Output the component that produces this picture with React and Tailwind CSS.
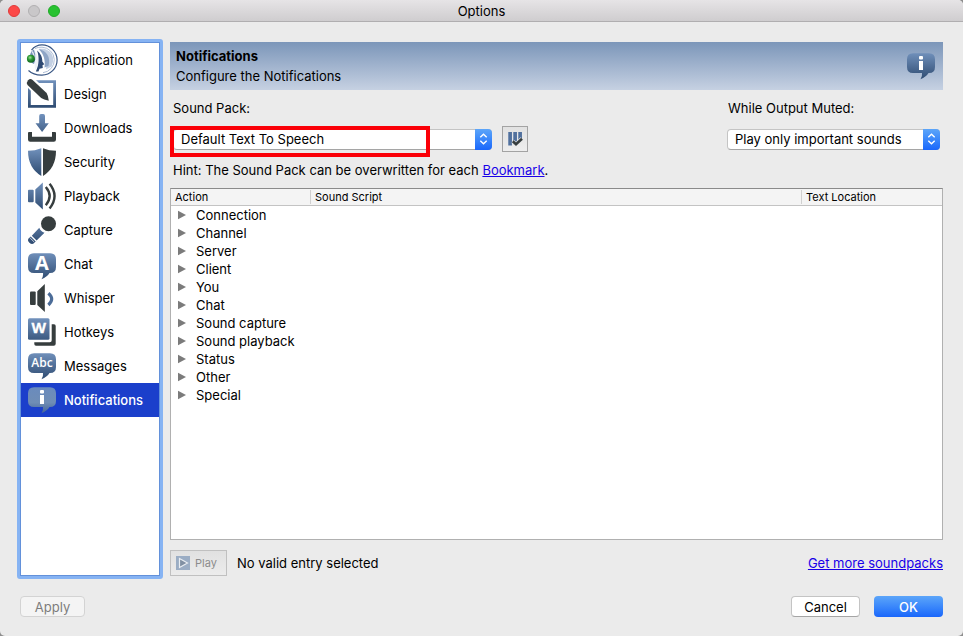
import React, { useState } from "react";

const STEEL = "url(#steel)";
const DARK = "#363d3e";

function Icon({ children, fill = STEEL }) {
  return (
    <svg viewBox="0 0 32 32" className="w-8 h-8 shrink-0" fill={fill} aria-hidden="true">
      {children}
    </svg>
  );
}

// Gradients shared by all the icons
function IconDefs() {
  return (
    <svg className="absolute w-0 h-0" aria-hidden="true">
      <defs>
        <linearGradient id="steel" gradientUnits="userSpaceOnUse" x1="0" y1="2" x2="0" y2="30">
          <stop offset="0" stopColor="#7292bd" />
          <stop offset="1" stopColor="#2d4a70" />
        </linearGradient>
        <linearGradient id="steel-selected" gradientUnits="userSpaceOnUse" x1="0" y1="3" x2="0" y2="29">
          <stop offset="0" stopColor="#6a8bbd" />
          <stop offset="0.6" stopColor="#6f8db5" />
          <stop offset="1" stopColor="#45659a" />
        </linearGradient>
        <linearGradient id="bars" x1="0" y1="0" x2="1" y2="0">
          <stop offset="0" stopColor="#8ba1c2" />
          <stop offset="0.4" stopColor="#4d6c99" />
          <stop offset="1" stopColor="#5877a3" />
        </linearGradient>
        <radialGradient id="led" cx="0.4" cy="0.35" r="0.7">
          <stop offset="0" stopColor="#a6e29a" />
          <stop offset="0.4" stopColor="#2e9a35" />
          <stop offset="1" stopColor="#0c5a1c" />
        </radialGradient>
      </defs>
    </svg>
  );
}

function Bubble({ label, size, weight, y }) {
  return (
    <>
      <path d="M8 3.3H24Q30 3.3 30 9.3V17Q30 23 24 23H23.5Q21 27 15.5 29.3Q17.5 26 17 23H8Q2 23 2 17V9.3Q2 3.3 8 3.3Z" />
      <text
        x="16"
        y={y}
        textAnchor="middle"
        fill="#fff"
        fontSize={size}
        fontWeight={weight}
        fontFamily="'Open Sans', sans-serif"
      >
        {label}
      </text>
    </>
  );
}

function InfoBubble() {
  return (
    <>
      <path d="M8 3.3H24Q30 3.3 30 9.3V17Q30 23 24 23H23.5Q21 27 15.5 29.3Q17.5 26 17 23H8Q2 23 2 17V9.3Q2 3.3 8 3.3Z" />
      <g fill="#fff">
        <rect x="14" y="6" width="4" height="3.4" rx="1" />
        <rect x="14" y="11" width="4" height="9" />
      </g>
    </>
  );
}

const icons = {
  application: (
    <>
      <path
        d="M5.500 6.200Q9.500 .9 16 .9A15.100 15.100 0 0 1 16 31.100Q7.500 31.300 2.500 26.500"
        fill="#fff"
        stroke="#3a5784"
        strokeWidth="1.200"
      />
      <path
        d="M9 4.500Q12 3 16 3.200A12.800 12.800 0 0 1 17 28.700"
        fill="none"
        stroke="#9badca"
        strokeWidth=".8"
      />
      <path d="M13 4.800C24 3.500 30.500 12 25.500 22.500L20 25.500C21.500 17 19.500 9.500 13 4.800Z" fill="#c3d0e3" />
      <path d="M12.500 5C20.500 6.500 25 13 22.500 22L18.500 23.500C19.500 16.500 18 10 12.500 5Z" fill="#8ea5c6" />
      <path d="M11 6.500C15 9.500 16.500 14 16.300 17.500L18.300 20.300L16.500 21.300L16.800 24L13.500 24.800L12.500 27.500H9.800C13 21 13.500 13 11 6.500Z" fill="#2f4a73" />
      <path d="M8.500 6.500C13 12 13.200 20 9.500 26C7.500 20 9.500 13 8.500 6.500Z" fill="#eef2f7" />
      <path d="M4 11.500Q4.500 7 8 5.500Q9.800 10 9.300 15.500L8 20Q4.500 19 4 15Z" fill="#7892b8" />
      <path d="M6 7.500Q8 9.500 8.300 15" fill="none" stroke="#e3e9f2" strokeWidth="1.200" />
      <circle cx="4.900" cy="14.800" r="4" fill="url(#led)" />
    </>
  ),
  design: (
    <>
      <path fillRule="evenodd" d="M2 2.200H30V29.800H2ZM4.800 5V27H27.200V5Z" />
      <path d="M1.500 1L8 .3L12.500 4.500L24 16L25 25L15 22.500L1 9Z" fill="#fff" />
      <path
        d="M2.100 2.300Q4.200 0 6.600 2L20.600 15Q22.200 17.500 22.800 22.700Q17.600 21.900 15.200 20L1.500 7Q.1 4.500 2.100 2.300Z"
        fill={DARK}
      />
    </>
  ),
  downloads: (
    <>
      <path d="M13.200 4Q13.200 2 15 2H17.200Q19 2 19 4V11.300H22.800L16.100 20L9.500 11.300H13.200Z" />
      <path
        d="M3 20H6V24.700H26V20H29Q30 20 30 21V27.500Q30 29.700 27.800 29.700H4.200Q2 29.700 2 27.500V21Q2 20 3 20Z"
        fill={DARK}
      />
    </>
  ),
  security: (
    <>
      <path d="M15.300 2.200V30Q2 22 2 4.800Q9 4.700 15.300 2.200Z" />
      <path d="M17 2.200V30Q30 22 30 4.800Q23 4.700 17 2.200Z" fill={DARK} />
    </>
  ),
  playback: (
    <>
      <rect x="2" y="9.700" width="5.700" height="12.600" rx="1" />
      <path d="M9.300 9.500L16.800 2.500V29.500L9.300 22.500Z" />
      <path
        d="M19.800 7Q27.500 16 19.800 25.300M23.600 3.800Q33.500 16 23.600 28.500"
        fill="none"
        stroke={DARK}
        strokeWidth="2.400"
      />
    </>
  ),
  capture: (
    <>
      <circle cx="22.500" cy="9.700" r="7.500" fill={DARK} />
      <path d="M13.300 13.800Q14.500 17.500 18.500 18.800L10.600 26.400L5.800 21.700Z" />
      <path d="M4.700 22.600L9.700 27.500L7.600 29.500Q5.700 30.700 3.400 28.700Q1 26.600 2.600 24.600Z" />
      <path d="M4.200 24.100L8.300 28.100" stroke="#fff" strokeWidth=".7" />
    </>
  ),
  chat: (
    <g transform="translate(0 2)">
      <Bubble label="A" size="20" weight="700" y="20" />
    </g>
  ),
  whisper: (
    <>
      <rect x="4" y="9.500" width="5.700" height="13.500" rx="1" fill={DARK} />
      <path d="M11.300 9.300L18.800 2V30L11.300 23Z" fill={DARK} />
      <path d="M22.400 11.300Q29 17 22.400 23" fill="none" stroke="#4c6c98" strokeWidth="3.200" />
    </>
  ),
  hotkeys: (
    <>
      <path
        d="M25.700 8.200H28Q29.700 8.200 29.700 10V27.700Q29.700 29.700 27.700 29.700H10Q8.300 29.700 8.300 28V26.200H23.700Q25.700 26.200 25.700 24.200Z"
        fill={DARK}
      />
      <rect x="2" y="2.300" width="21.500" height="21.500" rx="1.500" />
      <text
        x="12.800"
        y="16.500"
        textAnchor="middle"
        fill="#fff"
        stroke="#fff"
        strokeWidth=".3"
        fontSize="15"
        fontWeight="700"
        fontFamily="'Open Sans', sans-serif"
      >
        W
      </text>
    </>
  ),
  messages: <Bubble label="Abc" size="12" weight="600" y="17" />,
  notifications: <InfoBubble />,
};

const pages = [
  { id: "application", label: "Application" },
  { id: "design", label: "Design" },
  { id: "downloads", label: "Downloads" },
  { id: "security", label: "Security" },
  { id: "playback", label: "Playback" },
  { id: "capture", label: "Capture" },
  { id: "chat", label: "Chat" },
  { id: "whisper", label: "Whisper" },
  { id: "hotkeys", label: "Hotkeys" },
  { id: "messages", label: "Messages" },
  { id: "notifications", label: "Notifications" },
];

const actions = [
  "Connection",
  "Channel",
  "Server",
  "Client",
  "You",
  "Chat",
  "Sound capture",
  "Sound playback",
  "Status",
  "Other",
  "Special",
];

function TitleBar() {
  return (
    <header className="relative flex items-center justify-center h-[22px] bg-linear-to-b from-[#e6e4e6] to-[#cfcdcf] border-b border-[#b0aeb0]">
      <div className="absolute left-2 flex gap-2">
        <button aria-label="Close" className="w-3 h-3 rounded-full bg-[#fc4948] border border-[#df3a3a]" />
        <button aria-label="Minimize" className="w-3 h-3 rounded-full bg-[#c9c7c9] border border-[#b1afb1]" />
        <button aria-label="Zoom" className="w-3 h-3 rounded-full bg-[#28c231] border border-[#1faa27]" />
      </div>
      <h1>Options</h1>
    </header>
  );
}

function Sidebar({ current, onSelect }) {
  return (
    <nav className="w-[146px] shrink-0 rounded-[3px] border-3 border-[#86b3f3]">
      <ul className="h-full bg-white border border-[#6391da]">
        {pages.map((page) => (
          <li key={page.id}>
            <button
              onClick={() => onSelect(page.id)}
              className={
                page.id === current
                  ? "flex items-center gap-1.5 w-full h-[34px] pl-[5px] bg-[#1b3fcb] text-white font-medium"
                  : "flex items-center gap-1.5 w-full h-[34px] pl-[5px]"
              }
            >
              <Icon fill={page.id === current ? "url(#steel-selected)" : STEEL}>{icons[page.id]}</Icon>
              {page.label}
            </button>
          </li>
        ))}
      </ul>
    </nav>
  );
}

function Select({ id, options, className, children }) {
  return (
    <div className={`relative ${className}`}>
      <select
        id={id}
        className="block w-full h-[21px] pl-[7px] pr-5 appearance-none bg-white rounded-[4px] border border-[#c4c4c4] border-b-[#a5a5a5]"
      >
        {options.map((option) => (
          <option key={option}>{option}</option>
        ))}
      </select>
      <span className="absolute right-0 inset-y-0 w-[17px] rounded-r-[4px] bg-linear-to-b from-[#5ca5f9] to-[#1a66fb] flex items-center justify-center pointer-events-none">
        <svg viewBox="0 0 9 12" className="w-[9px] h-3" fill="none" stroke="#fff" strokeWidth="1.4" aria-hidden="true">
          <path d="M1.300 4.200L4.500 1.200L7.700 4.200M1.300 7.800L4.500 10.800L7.700 7.800" />
        </svg>
      </span>
      {children}
    </div>
  );
}

function ActionTable() {
  return (
    <div className="flex-1 bg-white border border-[#b0b0b0] border-t-[#8a8a8a]">
      <table className="w-full table-fixed border-collapse">
        <colgroup>
          <col className="w-[140px]" />
          <col />
          <col className="w-[140px]" />
        </colgroup>
        <thead className="text-[11px] bg-[#f4f4f4] border-b border-[#c3c3c3]">
          <tr className="h-4 text-left">
            <th className="p-0 pl-1 font-normal">
              <div className="h-3.5 leading-3.5 border-r border-[#d0d0d0]">Action</div>
            </th>
            <th className="p-0 pl-1 font-normal">
              <div className="h-3.5 leading-3.5 border-r border-[#d0d0d0]">Sound Script</div>
            </th>
            <th className="p-0 pl-1 font-normal">
              <div className="h-3.5 leading-3.5">Text Location</div>
            </th>
          </tr>
        </thead>
        <tbody>
          {actions.map((action) => (
            <tr key={action}>
              <td className="p-0">
                <button className="flex items-center h-[18px] pl-[7px] gap-2.5">
                  <svg viewBox="0 0 8 10" className="w-2 h-2.5" fill="#7b7b7b" aria-hidden="true">
                    <path d="M0 .8L8 5L0 9.200Z" />
                  </svg>
                  {action}
                </button>
              </td>
              <td />
              <td />
            </tr>
          ))}
        </tbody>
      </table>
    </div>
  );
}

function Notifications() {
  return (
    <main className="flex-1 flex flex-col gap-[9px] py-[3px]">
      <div className="flex items-center justify-between h-12 px-1.5 bg-linear-to-b from-[#7c96b9] to-[#c6d1e2]">
        <div className="leading-5">
          <h2 className="font-bold">Notifications</h2>
          <p>Configure the Notifications</p>
        </div>
        <Icon>
          <InfoBubble />
        </Icon>
      </div>

      <div className="flex justify-between px-[3px]">
        <div className="flex flex-col gap-[9px]">
          <label htmlFor="sound-pack">Sound Pack:</label>
          <div className="flex items-center gap-2.5">
            <Select id="sound-pack" className="w-[319px]" options={["Default Text To Speech"]}>
              <span className="absolute -left-[3px] -top-[3px] w-[260px] h-[31px] border-4 border-[#fb0007] pointer-events-none" />
            </Select>
            <button
              aria-label="Sound pack settings"
              className="flex items-center justify-center w-[26px] h-[26px] border border-[#a3a3a3] bg-linear-to-b from-[#e2e2e2] to-[#eeeeee]"
            >
              <svg viewBox="0 0 16 16" className="w-4 h-4" aria-hidden="true">
                <g fill="url(#bars)">
                  <path d="M1 1H5V14.500H1Z" />
                  <path d="M6 1H10V14H6Z" />
                  <path d="M11 1H15V10H11Z" />
                </g>
                <path d="M5.800 10.500L9 13.500L15 7.800" fill="none" stroke="#e8e8e8" strokeWidth="4" />
                <path d="M5.800 10.300L9 13.300L15 7.800" fill="none" stroke={DARK} strokeWidth="2.600" />
              </svg>
            </button>
          </div>
        </div>
        <div className="flex flex-col gap-[9px]">
          <label htmlFor="output-muted" className="pl-px">
            While Output Muted:
          </label>
          <div className="flex items-center h-[26px]">
            <Select id="output-muted" className="w-[213px]" options={["Play only important sounds"]} />
          </div>
        </div>
      </div>

      <p className="px-[3px]">
        Hint: The Sound Pack can be overwritten for each{" "}
        <a href="#bookmark" className="text-[#1800e8] underline">
          Bookmark
        </a>
        .
      </p>

      <ActionTable />

      <div className="flex items-center gap-2.5 pt-px">
        <button
          disabled
          className="flex items-center gap-[5px] w-[57px] h-[26px] pl-[5px] text-[11px] text-[#8c8c8c] border border-[#c0c0c0] bg-linear-to-b from-[#e1e1e1] to-[#ececec]"
        >
          <svg viewBox="0 0 14 14" className="w-3.5 h-3.5" aria-hidden="true">
            <rect width="14" height="14" fill="#9badc4" />
            <path d="M3.500 2.500L11.500 7L3.500 11.500Z" fill="#8190a3" stroke="#e9edf2" strokeWidth="1.200" />
          </svg>
          Play
        </button>
        <span>No valid entry selected</span>
        <a href="#soundpacks" className="ml-auto text-[#1800e8] underline">
          Get more soundpacks
        </a>
      </div>
    </main>
  );
}

function App() {
  const [current, setCurrent] = useState("notifications");

  return (
    <div className="min-h-screen flex bg-[#8e8e8e]">
      <IconDefs />
      <div className="flex-1 flex flex-col rounded-[5px] overflow-hidden bg-[#ebebeb] text-black text-[13px] leading-[18px] font-['Inter',sans-serif]">
        <TitleBar />
        <div className="flex-1 flex gap-[7px] pt-[17px] pl-[17px] pr-5">
          <Sidebar current={current} onSelect={setCurrent} />
          <Notifications />
        </div>
        <footer className="flex items-center gap-3.5 pt-[17px] pb-[19px] px-5">
          <button
            disabled
            className="w-[65px] h-[21px] mr-auto rounded-[4px] border border-[#d3d3d3] bg-[#f4f4f4] text-[#7d7d7d]"
          >
            Apply
          </button>
          <button className="w-[69px] h-[21px] rounded-[4px] border border-[#c4c4c4] border-b-[#a5a5a5] bg-white">
            Cancel
          </button>
          <button className="w-[69px] h-[21px] rounded-[4px] bg-linear-to-b from-[#5ca5f9] to-[#1a66fb] text-white font-medium">
            OK
          </button>
        </footer>
      </div>
    </div>
  );
}

export default App;
